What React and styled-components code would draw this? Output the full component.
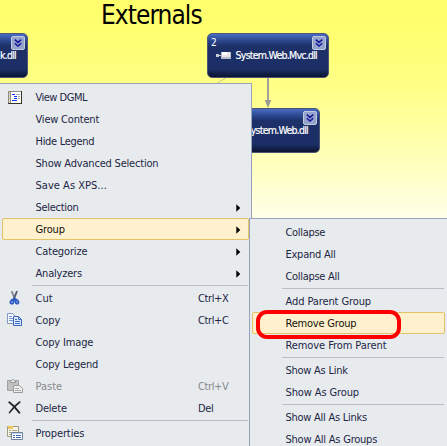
import React from "react";
import styled, { createGlobalStyle, css } from "styled-components";

const GlobalStyle = createGlobalStyle`
  * { box-sizing: border-box; }
  html, body { margin: 0; overflow: hidden; }
  body { font-family: "DejaVu Sans Condensed", "DejaVu Sans", sans-serif; font-stretch: condensed; font-size: 11px; }
`;

const Canvas = styled.main`
  position: relative;
  width: 447px;
  height: 446px;
  padding-left: 101px;
  overflow: hidden;
  background: linear-gradient(#ffff6c 0px, #ffff70 30px, #ffff88 90px, #ffffb0 145px, #ffffe8 218px);
`;

const Title = styled.h1`
  margin: 0;
  font-size: 26px;
  line-height: 30px;
  font-weight: 400;
  letter-spacing: -0.95px;
  color: #000;
`;

const Edges = styled.svg`
  position: absolute;
  left: 200px;
  top: 70px;
`;

const NodeBox = styled.div`
  position: absolute;
  left: ${(p) => p.$x}px;
  top: ${(p) => p.$y}px;
  width: ${(p) => p.$w}px;
  height: 45px;
  padding: 2px 2px 0 3px;
  border: 1px solid #4d5674;
  border-radius: 5px;
  background: linear-gradient(#4a6cc4 0, #2d4a94 6px, #1d3068 12px, #1b2f66 35px, #0b1330 43px);
  color: #fff;
`;

const NodeHeader = styled.div`
  display: flex;
  justify-content: space-between;
  height: 14px;
  font-size: 10px;
  line-height: 13px;
`;

const NodeBody = styled.div`
  display: flex;
  align-items: center;
  justify-content: flex-end;
  gap: 4px;
  height: 14px;
  margin-top: -2px;
  padding-right: 9px;
`;

const NodeName = styled.span`
  font-size: 10.5px;
  line-height: 14px;
  white-space: nowrap;
  letter-spacing: -0.75px;
  -webkit-text-stroke: 0.2px #fff;
`;

const ExpandBadge = styled.span`
  display: flex;
  width: 14px;
  height: 14px;
  margin-left: auto;
  align-items: center;
  justify-content: center;
  border: 1px solid #c0cae0;
  border-radius: 2px;
  background: #95a3cb;
`;

const Menu = styled.div`
  position: absolute;
  left: ${(p) => p.$x}px;
  top: ${(p) => p.$y}px;
  width: ${(p) => p.$w}px;
  height: 400px;
  padding: 2px;
  border: 1px solid #97a3b8;
  background: #e8ebee;
`;

const Row = styled.div`
  display: flex;
  align-items: center;
  height: 22px;
  border: 1px solid transparent;
  border-radius: 2px;
  color: ${(p) => (p.$disabled ? "#87898d" : "#1c2644")};
  ${(p) =>
    p.$active &&
    css`
      border-color: #e5c365;
      background: #fff1cd;
      color: #14100c;
    `}
`;

const IconSlot = styled.span`
  display: flex;
  flex: none;
  width: 32.5px;
  height: 20px;
  align-items: center;
  padding-left: 4px;
`;

const Label = styled.span`
  flex: 1;
  padding-top: 2px;
  white-space: nowrap;
  line-height: 14px;
  letter-spacing: ${(p) => p.$track ?? -0.25}px;
`;

const Shortcut = styled.span`
  flex: none;
  width: 50px;
  padding-top: 2px;
  white-space: nowrap;
  line-height: 14px;
  letter-spacing: -0.4px;
`;

const Arrow = styled.svg`
  flex: none;
  margin: 1px 7px 0 0;
`;

const Separator = styled.hr`
  height: 3px;
  margin: 0 1px 0 30px;
  border: 0;
  background: linear-gradient(transparent 1px, #b8bdc7 1px, #b8bdc7 2px, transparent 2px);
`;

const Highlight = styled.div`
  position: absolute;
  left: 256px;
  top: 310px;
  width: 145px;
  height: 29px;
  border: 4px solid #fe0000;
  border-radius: 11px;
`;

const Chevrons = () => (
  <svg width="8" height="8" viewBox="0 0 8 8" fill="none" stroke="#15159a" strokeWidth="1.5">
    <path d="M0.8 0.6 4 3.4 7.2 0.6M0.8 4.2 4 7 7.2 4.2" />
  </svg>
);

const DgmlIcon = () => (
  <svg width="16" height="16" viewBox="0 0 16 16" shapeRendering="crispEdges">
    <path fill="#d8d6cc" d="M1 2h14v13H1z" />
    <path fill="#fff" d="M4 3h10v11H4z" />
    <path fill="#8f8c7e" d="M1 2h14v1H1zM1 2h1v12H1zM3 3h1v11H3z" />
    <path fill="#33322c" d="M14 2h1v13h-1zM1 14h14v1H1z" />
    <path fill="#0f2cff" d="M5 5h3v1H5zM7 7h3v1H7zM7 9h3v1H7zM5 11h5v1H5z" />
    <path fill="#a6a6a6" d="M9 5h4v1H9zM11 7h2v1h-2zM11 9h2v1h-2z" />
  </svg>
);

const CutIcon = () => (
  <svg width="16" height="16" viewBox="0 0 16 16" fill="none">
    <path stroke="#7e8795" strokeWidth="1.8" d="M4.6 1.2 8 9" />
    <path stroke="#4e586c" strokeWidth="1.8" d="M10 1.2 6.8 9" />
    <path
      stroke="#2e5cc0"
      strokeWidth="1.9"
      d="M6.6 9 4.4 10.4q-1.6 1.2-.6 2.8 1.8 1.4 2.6-.8zM8.2 9l2.2 1.4q1.8 1.3.7 2.8-1.7 1.2-2.4-.8z"
    />
  </svg>
);

const CopyIcon = () => (
  <svg width="16" height="16" viewBox="0 0 16 16">
    <path fill="#f5f9ff" stroke="#8297bf" d="M.5 1.5h5l3 3v7h-8z" />
    <path stroke="#6c96dd" d="M2 4.5h3M2 6.5h4M2 8.5h4" />
    <path fill="#dce9ff" stroke="#3c66bd" d="M6.5 4.5h5l3 3v6h-8z" />
    <path fill="none" stroke="#3d6dc9" d="M11.5 4.5v3h3M8 7.5h2M8 9.5h5M8 11.5h5" />
  </svg>
);

const PasteIcon = () => (
  <svg width="16" height="16" viewBox="0 0 16 16">
    <path fill="#c2c2c2" stroke="#a2a2a2" d="M.5 2.5h11v10H.5z" />
    <path fill="#e0e0e0" stroke="#999" d="M3.5 4.5v-2h1l1-1h1l1 1h1v2z" />
    <path fill="#eee" stroke="#9a9a9a" d="M6.5 7.5h6l3 3v4h-9z" />
    <path stroke="#aaa" d="M8 10.5h4M8 12.5h6" />
  </svg>
);

const DeleteIcon = () => (
  <svg width="16" height="16" viewBox="0 0 16 16" fill="none" stroke="#252525" strokeLinecap="round">
    <path strokeWidth="1.9" d="M2.3 2.2Q7.5 6 12.4 12.7" />
    <path strokeWidth="1.6" d="M12.8 2Q7 6.2 2.5 12.6" />
  </svg>
);

const PropertiesIcon = () => (
  <svg width="16" height="16" viewBox="0 0 16 16">
    <path fill="#f9f6e9" stroke="#a29b83" d="M.5 1.5h11v10H.5z" />
    <path fill="#edc760" d="M1 1h5v3H1z" />
    <path stroke="#aaa38b" d="M2 5.5h2M5 5.5h5M2 7.5h2M2 9.5h2" />
    <path fill="#fff" stroke="#6f7f9d" d="M4.5 7.5h11v7h-11z" />
    <path fill="#c2d1eb" d="M5 8h10v1H5z" />
    <path stroke="#3d65ad" d="M6 10.5h2M9 10.5h5M6 12.5h2M9 12.5h5" />
  </svg>
);

const SubmenuArrow = () => (
  <Arrow width="5" height="8" viewBox="0 0 5 8" fill="#000">
    <path d="M0.3 0.3 4.3 4 0.3 7.7z" />
  </Arrow>
);

const AssemblyIcon = () => (
  <svg width="17" height="9" viewBox="0 0 17 9">
    <path fill="#c6cbd8" d="M1 3h3v3H1zM4 4h3v1H4z" />
    <path fill="#b9bdc9" d="M6 1h10v7H6z" />
    <path fill="#e8e8ea" d="M7 1h8v5H7z" />
    <path fill="#fff" d="M7 1h5v3H7z" />
  </svg>
);

const mainItems = [
  { label: "View DGML", icon: <DgmlIcon />, track: -0.5 },
  { label: "View Content", track: -0.2 },
  { label: "Hide Legend", track: -0.3 },
  { label: "Show Advanced Selection", track: -0.2 },
  { label: "Save As XPS...", track: 0.03 },
  { label: "Selection", submenu: true, track: -0.3 },
  { label: "Group", submenu: true, active: true, track: -0.15 },
  { label: "Categorize", submenu: true, track: -0.15 },
  { label: "Analyzers", submenu: true, track: -0.2 },
  null,
  { label: "Cut", icon: <CutIcon />, shortcut: "Ctrl+X", track: 0 },
  { label: "Copy", icon: <CopyIcon />, shortcut: "Ctrl+C", track: -0.1 },
  { label: "Copy Image", track: -0.15 },
  { label: "Copy Legend", track: -0.17 },
  { label: "Paste", icon: <PasteIcon />, shortcut: "Ctrl+V", disabled: true, track: 0 },
  { label: "Delete", icon: <DeleteIcon />, shortcut: "Del", track: -0.2 },
  null,
  { label: "Properties", icon: <PropertiesIcon />, track: -0.12 },
];

const groupItems = [
  { label: "Collapse", track: -0.3 },
  { label: "Expand All", track: -0.25 },
  { label: "Collapse All", track: -0.3 },
  null,
  { label: "Add Parent Group", track: -0.1 },
  { label: "Remove Group", active: true, track: -0.2 },
  { label: "Remove From Parent", track: -0.08 },
  null,
  { label: "Show As Link", track: -0.25 },
  { label: "Show As Group", track: -0.12 },
  null,
  { label: "Show All As Links" },
  { label: "Show All As Groups", track: -0.22 },
];

const MenuItems = ({ items }) =>
  items.map((item, i) =>
    item ? (
      <Row key={i} $active={item.active} $disabled={item.disabled}>
        <IconSlot>{item.icon}</IconSlot>
        <Label $track={item.track}>{item.label}</Label>
        {item.shortcut && <Shortcut>{item.shortcut}</Shortcut>}
        {item.submenu && <SubmenuArrow />}
      </Row>
    ) : (
      <Separator key={i} />
    )
  );

const GraphNode = ({ x, y, w, name, count, icon }) => (
  <NodeBox $x={x} $y={y} $w={w}>
    <NodeHeader>
      {count}
      <ExpandBadge>
        <Chevrons />
      </ExpandBadge>
    </NodeHeader>
    <NodeBody>
      {icon}
      <NodeName>{name}</NodeName>
    </NodeBody>
  </NodeBox>
);

export default function App() {
  return (
    <>
      <GlobalStyle />
      <Canvas>
        <Title>Externals</Title>
        <Edges width="100" height="45" viewBox="0 0 100 45">
          <path d="M26 8 14 15" stroke="#c8c887" />
          <path d="M68 7v25" stroke="#a3a39b" strokeWidth="2" />
          <path d="M64.7 30h6.6L68 38z" fill="#9b9b95" />
        </Edges>
        <GraphNode x={-93} y={33} w={121} name="k.dll" />
        <GraphNode x={207} y={33} w={122} name="System.Web.Mvc.dll" count="2" icon={<AssemblyIcon />} />
        <GraphNode x={220} y={108} w={100} name="System.Web.dll" />
        <Menu $x={-1} $y={83} $w={253}>
          <MenuItems items={mainItems} />
        </Menu>
        <Menu $x={249} $y={218} $w={199}>
          <MenuItems items={groupItems} />
        </Menu>
        <Highlight />
      </Canvas>
    </>
  );
}
